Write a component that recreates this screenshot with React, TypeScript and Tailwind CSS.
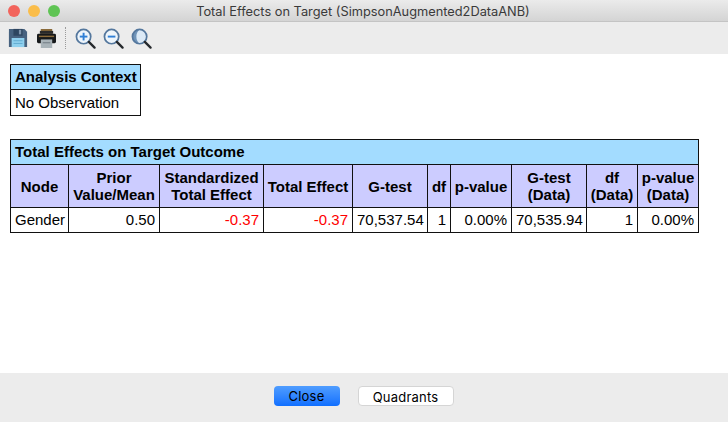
const headCell = "border border-[#111] bg-[#ccccff] px-[1px] text-center font-bold leading-[17px]";
const valueCell = "border border-[#111] px-[4px] text-right";

function Magnifier({ sign }: { sign: "plus" | "minus" | "fit" }) {
  return (
    <svg width="21" height="21" viewBox="0 0 22 22" fill="none">
      <circle cx="9" cy="9" r="7.5" fill={sign === "fit" ? "#dbe9f6" : "#eef5fb"} />
      {sign === "fit" && <path d="M9 1.5a7.5 7.5 0 0 0 0 15a10 10 0 0 1 0-15z" fill="#6f93b8" />}
      <circle cx="9" cy="9" r="7.5" stroke="#54779d" strokeWidth="1.8" />
      <path d="M14.5 14.5 L20.5 20.5" stroke="#26292d" strokeWidth="2.4" strokeLinecap="round" />
      {sign !== "fit" && <path d="M5 9h8" stroke="#2f7fd6" strokeWidth="2" />}
      {sign === "plus" && <path d="M9 5v8" stroke="#2f7fd6" strokeWidth="2" />}
    </svg>
  );
}

function SaveIcon() {
  return (
    <svg width="20" height="20" viewBox="0 0 22 22">
      <path d="M1 1h17l3 3v17H1z" fill="#47627f" />
      <rect x="6" y="1" width="10" height="7.5" fill="#2e4660" />
      <rect x="12" y="2" width="2.5" height="5" fill="#7d93aa" />
      <rect x="4" y="11" width="14" height="10" fill="#8fd0ee" />
      <path d="M6 14h10M6 17h10" stroke="#5fa9cf" strokeWidth="1" />
    </svg>
  );
}

function PrintIcon() {
  return (
    <svg width="21" height="19" viewBox="0 0 22 20">
      <rect x="5" y="0" width="12" height="5" fill="#8a6a3a" />
      <rect x="4" y="2" width="14" height="3" fill="#2a2a2a" />
      <rect x="1" y="5" width="20" height="10" rx="1.5" fill="#17191b" />
      <rect x="3" y="7" width="16" height="1.5" fill="#8a6a3a" />
      <rect x="5" y="11" width="12" height="9" fill="#a9b3b8" />
      <rect x="7" y="14" width="8" height="1" fill="#6f7a80" />
    </svg>
  );
}

export default function App() {
  return (
    <div className="flex h-[422px] w-[728px] flex-col overflow-hidden bg-white font-['Liberation_Sans',Arial,sans-serif] text-[15px] text-black">
      {/* Title bar */}
      <div className="relative flex h-[22px] shrink-0 items-center justify-center border-b border-[#c4c4c4] bg-gradient-to-b from-[#ebebeb] to-[#d4d4d4] pr-[2px] pt-[2px]">
        <div className="absolute left-[8px] top-[5px] flex gap-[8px]">
          <span className="h-[12px] w-[12px] rounded-full bg-[#f2645c]" />
          <span className="h-[12px] w-[12px] rounded-full bg-[#fabd4a]" />
          <span className="h-[12px] w-[12px] rounded-full bg-[#5fc454]" />
        </div>
        <span className="font-['Inter',sans-serif] text-[12.8px] text-[#3a3a3a]">
          Total Effects on Target (SimpsonAugmented2DataANB)
        </span>
      </div>

      {/* Toolbar */}
      <div className="flex h-[32px] shrink-0 items-center bg-[#ececec] pl-[8px]">
        <SaveIcon />
        <span className="ml-[8px] flex"><PrintIcon /></span>
        <span className="ml-[8px] h-[22px] border-l border-dotted border-[#9a9a9a]" />
        <span className="ml-[9px] flex"><Magnifier sign="plus" /></span>
        <span className="ml-[7px] flex"><Magnifier sign="minus" /></span>
        <span className="ml-[7px] flex"><Magnifier sign="fit" /></span>
      </div>

      {/* Report */}
      <div className="flex flex-1 flex-col items-start gap-[23px] bg-white pl-[10px] pt-[10px]">
        <table className="w-[131px] table-fixed border-collapse">
          <tbody>
            <tr className="h-[25px]">
              <td className="border border-[#111] bg-[#a3dcff] px-[4px] font-bold whitespace-nowrap">Analysis Context</td>
            </tr>
            <tr className="h-[26px]">
              <td className="border border-[#111] px-[4px] pt-[1px] whitespace-nowrap">No Observation</td>
            </tr>
          </tbody>
        </table>

        <table className="w-[688px] table-fixed border-collapse">
          <colgroup>
            <col className="w-[58px]" />
            <col className="w-[91px]" />
            <col className="w-[104px]" />
            <col className="w-[89px]" />
            <col className="w-[75px]" />
            <col className="w-[23px]" />
            <col className="w-[61px]" />
            <col className="w-[75px]" />
            <col className="w-[51px]" />
            <col className="w-[61px]" />
          </colgroup>
          <tbody>
            <tr className="h-[25px]">
              <td colSpan={10} className="border border-[#111] bg-[#a3dcff] px-[4px] font-bold">
                Total Effects on Target Outcome
              </td>
            </tr>
            <tr className="h-[43px]">
              <td className={headCell}>Node</td>
              <td className={headCell}>Prior<br />Value/Mean</td>
              <td className={`${headCell} whitespace-nowrap`}>Standardized<br />Total Effect</td>
              <td className={`${headCell} whitespace-nowrap`}>Total Effect</td>
              <td className={headCell}>G-test</td>
              <td className={headCell}>df</td>
              <td className={headCell}>p-value</td>
              <td className={headCell}>G-test<br />(Data)</td>
              <td className={headCell}>df<br />(Data)</td>
              <td className={headCell}>p-value<br />(Data)</td>
            </tr>
            <tr className="h-[25px]">
              <td className="border border-[#111] px-[4px]">Gender</td>
              <td className={valueCell}>0.50</td>
              <td className={`${valueCell} text-[#ff0000]`}>-0.37</td>
              <td className={`${valueCell} text-[#ff0000]`}>-0.37</td>
              <td className={valueCell}>70,537.54</td>
              <td className={valueCell}>1</td>
              <td className={valueCell}>0.00%</td>
              <td className={valueCell}>70,535.94</td>
              <td className={valueCell}>1</td>
              <td className={valueCell}>0.00%</td>
            </tr>
          </tbody>
        </table>
      </div>

      {/* Footer */}
      <div className="flex h-[49px] shrink-0 items-center justify-center gap-[18px] bg-[#ececec] pb-[3px] pr-[1px] font-['Inter',sans-serif] text-[13px] tracking-[0.2px]">
        <button className="h-[20px] w-[66px] rounded-[4px] bg-gradient-to-b from-[#4f9dff] to-[#0f6fff] pt-[1px] text-black">
          Close
        </button>
        <button className="h-[20px] w-[96px] rounded-[4px] border border-[#d5d5d5] bg-white pt-[1px] text-black">
          Quadrants
        </button>
      </div>
    </div>
  );
}
